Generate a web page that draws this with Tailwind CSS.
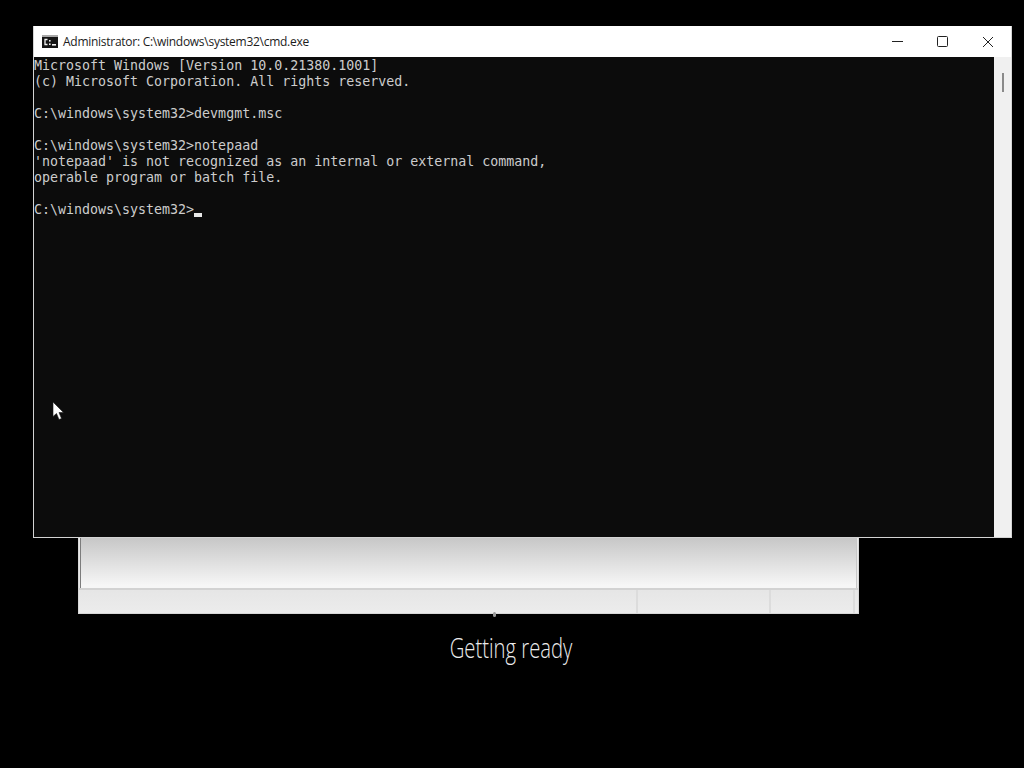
<!DOCTYPE html>
<html lang="en">
<head>
<meta charset="utf-8">
<title>cmd</title>
<script src="https://cdn.jsdelivr.net/npm/@tailwindcss/browser@4"></script>
</head>
<body class="bg-black">
<div class="relative w-[1024px] h-[768px] bg-black overflow-hidden">

  <!-- Setup window behind -->
  <div class="absolute left-[78px] top-[530px] w-[781px] h-[84px] flex flex-col bg-[#e9e9e9] border border-[#d8d8d8]">
    <div class="h-[57px] ml-[1px] mr-[1px] border-l-[1px] border-r-[1px] border-l-[#7c7c7c] border-r-[#c8c8c8] bg-gradient-to-b from-[#c8c8c8] from-[14%] to-[#f6f6f6] to-[95%]"></div>
    <div class="h-[2px] bg-[#d2d2d2]"></div>
    <div class="flex-1 flex bg-gradient-to-b from-[#e6e6e6] to-[#ececec]">
      <div class="w-[559px] border-r-2 border-[#dcdcdc]"></div>
      <div class="w-[133px] border-r-2 border-[#dcdcdc]"></div>
      <div class="w-[84px] border-r-2 border-[#dcdcdc]"></div>
    </div>
  </div>
  <div class="absolute left-[493px] top-[612px] w-[3px] h-[5px] rounded-full bg-[#9a9a9a]"></div>

  <!-- Getting ready -->
  <div class="absolute left-[411px] top-[628px] w-[200px] text-center text-[27px] leading-[40px] font-light text-[#ececec] font-['Open_Sans',sans-serif] scale-x-[0.75]">Getting ready</div>

  <!-- cmd window -->
  <div class="absolute left-[33px] top-[26px] w-[979px] h-[512px] flex flex-col bg-white border border-[#d4d4d4] border-t-0">
    <div class="h-[31px] shrink-0 flex items-center bg-white">
      <svg class="ml-[8px] mt-[-1px]" width="16" height="13" viewBox="0 0 16 13">
        <rect x="0" y="0" width="16" height="13" fill="#151515"/>
        <rect x="0" y="0" width="16" height="2" fill="#a8a8a8"/>
        <path d="M5.5 4.5H3V9.5H5.5" fill="none" stroke="#f2f2f2" stroke-width="1.3"/>
        <rect x="7" y="5" width="1.6" height="1.6" fill="#f2f2f2"/>
        <rect x="7" y="8.4" width="1.6" height="1.6" fill="#f2f2f2"/>
        <rect x="10" y="9" width="4" height="1.6" fill="#f2f2f2"/>
      </svg>
      <span class="ml-[5px] text-[12px] text-[#1c1c1c] whitespace-nowrap font-['Open_Sans',sans-serif] tracking-[-0.27px]">Administrator: C:\windows\system32\cmd.exe</span>
      <div class="ml-auto flex items-center gap-[34px] mr-[17px]">
        <svg width="11" height="11" viewBox="0 0 11 11"><path d="M0 5.5H11" stroke="#222" stroke-width="1"/></svg>
        <svg width="11" height="11" viewBox="0 0 11 11"><rect x="0.5" y="0.5" width="10" height="10" rx="1" fill="none" stroke="#222" stroke-width="1"/></svg>
        <svg width="12" height="12" viewBox="0 0 12 12"><path d="M1 1L11 11M11 1L1 11" stroke="#222" stroke-width="1"/></svg>
      </div>
    </div>
    <div class="flex-1 flex min-h-0">
      <pre class="flex-1 bg-[#0c0c0c] text-[#cccccc] text-[13.3px] leading-[16px] pt-px font-['DejaVu_Sans_Mono',monospace]">Microsoft Windows [Version 10.0.21380.1001]
(c) Microsoft Corporation. All rights reserved.

C:\windows\system32&gt;devmgmt.msc

C:\windows\system32&gt;notepaad
'notepaad' is not recognized as an internal or external command,
operable program or batch file.

C:\windows\system32&gt;<span class="inline-block w-[8px] h-[4px] bg-[#e8e8e8] align-[-3px]"></span></pre>
      <div class="w-[17px] shrink-0 bg-[#f0f0f0] flex justify-center pt-[16px]">
        <div class="w-[2px] h-[19px] bg-[#8a8a8a]"></div>
      </div>
    </div>
  </div>

  <!-- Mouse pointer -->
  <svg class="absolute left-[52px] top-[401px]" width="13" height="20" viewBox="0 0 13 20">
    <path d="M1 1V15.5L4.5 12.5L7 18.5L9.5 17.5L7 11.5H11.5Z" fill="#ffffff" stroke="#1a1a1a" stroke-width="0.6"/>
  </svg>
</div>
</body>
</html>
